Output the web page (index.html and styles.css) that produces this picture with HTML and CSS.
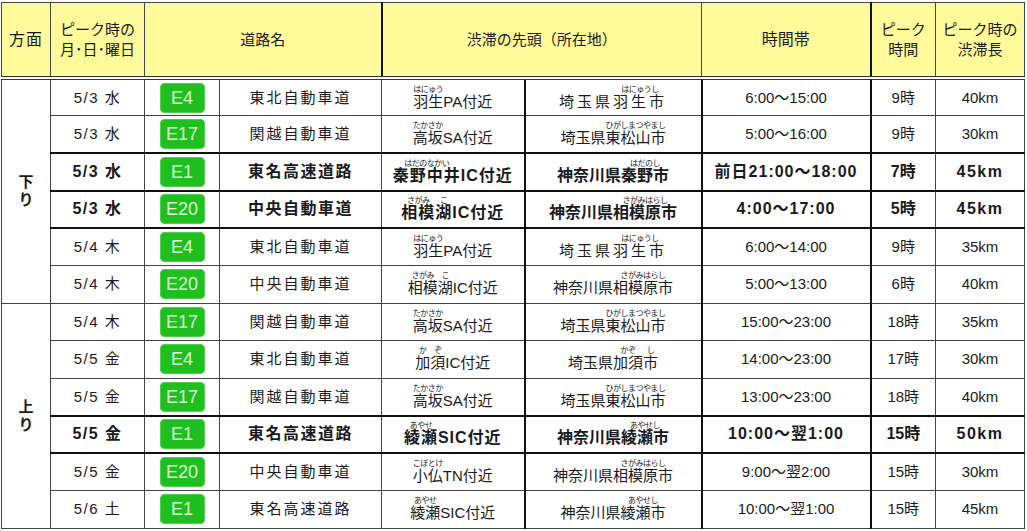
FILE: index.html
```html
<!DOCTYPE html>
<html lang="ja">
<head>
<meta charset="utf-8">
<title>渋滞予測</title>
<link rel="stylesheet" href="styles.css">
</head>
<body>
<div class="sheet">
<table class="traffic">
  <colgroup>
    <col class="w-dir"><col class="w-date"><col class="w-badge"><col class="w-road"><col class="w-loc1"><col class="w-loc2"><col class="w-time"><col class="w-peak"><col class="w-len">
  </colgroup>
  <thead>
    <tr>
      <th class="h-dir">方面</th>
      <th>ピーク時の<br>月･日･曜日</th>
      <th colspan="2">道路名</th>
      <th colspan="2" class="h-loc">渋滞の先頭（所在地）</th>
      <th class="h-time">時間帯</th>
      <th class="h-peak">ピーク<br>時間</th>
      <th>ピーク時の<br>渋滞長</th>
    </tr>
  </thead>
  <tbody>
    <tr>
      <td rowspan="6" class="dir">下<br>り</td>
      <td class="date">5/3 水</td>
      <td><span class="badge">E4</span></td>
      <td class="road">東北自動車道</td>
      <td class="loc1"><ruby>羽生<rt>はにゅう</rt></ruby>PA付近</td>
      <td class="loc2 wide">埼玉県<ruby>羽生市<rt>はにゅうし</rt></ruby></td>
      <td class="time">6:00〜15:00</td>
      <td class="peak">9時</td>
      <td class="len">40km</td>
    </tr>
    <tr>
      <td class="date">5/3 水</td>
      <td><span class="badge">E17</span></td>
      <td class="road">関越自動車道</td>
      <td class="loc1"><ruby>高坂<rt>たかさか</rt></ruby>SA付近</td>
      <td class="loc2">埼玉県<ruby>東松山市<rt>ひがしまつやまし</rt></ruby></td>
      <td class="time">5:00〜16:00</td>
      <td class="peak">9時</td>
      <td class="len">30km</td>
    </tr>
    <tr class="hl">
      <td class="date">5/3 水</td>
      <td><span class="badge">E1</span></td>
      <td class="road">東名高速道路</td>
      <td class="loc1"><ruby>秦野中井<rt>はだのなかい</rt></ruby>IC付近</td>
      <td class="loc2">神奈川県<ruby>秦野市<rt>はだのし</rt></ruby></td>
      <td class="time">前日21:00〜18:00</td>
      <td class="peak">7時</td>
      <td class="len">45km</td>
    </tr>
    <tr class="hl">
      <td class="date">5/3 水</td>
      <td><span class="badge">E20</span></td>
      <td class="road">中央自動車道</td>
      <td class="loc1"><ruby>相模<rt>さがみ</rt></ruby><ruby>湖<rt>こ</rt></ruby>IC付近</td>
      <td class="loc2">神奈川県<ruby>相模原市<rt>さがみはらし</rt></ruby></td>
      <td class="time">4:00〜17:00</td>
      <td class="peak">5時</td>
      <td class="len">45km</td>
    </tr>
    <tr>
      <td class="date">5/4 木</td>
      <td><span class="badge">E4</span></td>
      <td class="road">東北自動車道</td>
      <td class="loc1"><ruby>羽生<rt>はにゅう</rt></ruby>PA付近</td>
      <td class="loc2 wide">埼玉県<ruby>羽生市<rt>はにゅうし</rt></ruby></td>
      <td class="time">6:00〜14:00</td>
      <td class="peak">9時</td>
      <td class="len">35km</td>
    </tr>
    <tr>
      <td class="date">5/4 木</td>
      <td><span class="badge">E20</span></td>
      <td class="road">中央自動車道</td>
      <td class="loc1"><ruby>相模<rt>さがみ</rt></ruby><ruby>湖<rt>こ</rt></ruby>IC付近</td>
      <td class="loc2">神奈川県<ruby>相模原市<rt>さがみはらし</rt></ruby></td>
      <td class="time">5:00〜13:00</td>
      <td class="peak">6時</td>
      <td class="len">40km</td>
    </tr>
    <tr>
      <td rowspan="6" class="dir">上<br>り</td>
      <td class="date">5/4 木</td>
      <td><span class="badge">E17</span></td>
      <td class="road">関越自動車道</td>
      <td class="loc1"><ruby>高坂<rt>たかさか</rt></ruby>SA付近</td>
      <td class="loc2">埼玉県<ruby>東松山市<rt>ひがしまつやまし</rt></ruby></td>
      <td class="time">15:00〜23:00</td>
      <td class="peak">18時</td>
      <td class="len">35km</td>
    </tr>
    <tr>
      <td class="date">5/5 金</td>
      <td><span class="badge">E4</span></td>
      <td class="road">東北自動車道</td>
      <td class="loc1"><ruby>加<rt>か</rt></ruby><ruby>須<rt>ぞ</rt></ruby>IC付近</td>
      <td class="loc2">埼玉県<ruby>加須<rt>かぞ</rt></ruby><ruby>市<rt>し</rt></ruby></td>
      <td class="time">14:00〜23:00</td>
      <td class="peak">17時</td>
      <td class="len">30km</td>
    </tr>
    <tr>
      <td class="date">5/5 金</td>
      <td><span class="badge">E17</span></td>
      <td class="road">関越自動車道</td>
      <td class="loc1"><ruby>高坂<rt>たかさか</rt></ruby>SA付近</td>
      <td class="loc2">埼玉県<ruby>東松山市<rt>ひがしまつやまし</rt></ruby></td>
      <td class="time">13:00〜23:00</td>
      <td class="peak">18時</td>
      <td class="len">40km</td>
    </tr>
    <tr class="hl">
      <td class="date">5/5 金</td>
      <td><span class="badge">E1</span></td>
      <td class="road">東名高速道路</td>
      <td class="loc1"><ruby>綾瀬<rt>あやせ</rt></ruby>SIC付近</td>
      <td class="loc2">神奈川県<ruby>綾瀬市<rt>あやせし</rt></ruby></td>
      <td class="time">10:00〜翌1:00</td>
      <td class="peak">15時</td>
      <td class="len">50km</td>
    </tr>
    <tr>
      <td class="date">5/5 金</td>
      <td><span class="badge">E20</span></td>
      <td class="road">中央自動車道</td>
      <td class="loc1"><ruby>小仏<rt>こぼとけ</rt></ruby>TN付近</td>
      <td class="loc2">神奈川県<ruby>相模原市<rt>さがみはらし</rt></ruby></td>
      <td class="time">9:00〜翌2:00</td>
      <td class="peak">15時</td>
      <td class="len">30km</td>
    </tr>
    <tr>
      <td class="date">5/6 土</td>
      <td><span class="badge">E1</span></td>
      <td class="road">東名高速道路</td>
      <td class="loc1"><ruby>綾瀬<rt>あやせ</rt></ruby>SIC付近</td>
      <td class="loc2">神奈川県<ruby>綾瀬市<rt>あやせし</rt></ruby></td>
      <td class="time">10:00〜翌1:00</td>
      <td class="peak">15時</td>
      <td class="len">45km</td>
    </tr>
  </tbody>
</table>
</div>
</body>
</html>
```

FILE: styles.css
```css
html, body {
  margin: 0;
  background: #ffffff;
}

body {
  font-family: "Liberation Sans", "Noto Sans CJK JP", sans-serif;
  color: #1a1a1a;
}

.sheet {
  padding: 2px 0 0 1px;
}

.traffic {
  border-collapse: collapse;
  table-layout: fixed;
  width: 1023px;
  border: 1px solid #333;
}

.w-dir { width: 49px; }
.w-date { width: 94px; }
.w-badge { width: 75px; }
.w-road { width: 162px; }
.w-loc1 { width: 143px; }
.w-loc2 { width: 177px; }
.w-time { width: 169px; }
.w-peak { width: 65px; }
.w-len { width: 89px; }

.traffic th,
.traffic td {
  border: 1px solid #444;
  padding: 0;
  text-align: center;
  vertical-align: middle;
  white-space: nowrap;
}

.traffic thead th {
  background: #fffb9b;
  font-weight: normal;
  font-size: 15px;
  line-height: 20px;
  height: 73px;
  border-bottom: 4px double #333;
}

.traffic thead th.h-dir {
  font-size: 16px;
  letter-spacing: 1px;
}

.traffic thead th.h-time {
  font-size: 16px;
}

.traffic thead th.h-loc,
.traffic td.loc2,
.traffic td.time {
  border-left: 2px solid #111;
}

.traffic td.time,
.traffic thead th.h-time {
  border-right: 2px solid #111;
}

.traffic td.road {
  border-left: 1px solid #222;
}

.traffic tbody tr {
  height: 37.5px;
}

.traffic td {
  font-size: 15px;
  line-height: 18px;
}

.dir {
  font-size: 19px;
  font-weight: bold;
  line-height: 26px;
}

.date {
  letter-spacing: 1.5px;
}

.road {
  letter-spacing: 2px;
}

.loc2.wide {
  letter-spacing: 3px;
}

.loc1,
.loc2 {
  padding-top: 3px;
}

.loc1 ruby,
.loc2 ruby {
  ruby-align: center;
}

.loc1 rt,
.loc2 rt {
  font-size: 8px;
  line-height: 11px;
  letter-spacing: -0.5px;
  color: #222;
  ruby-align: center;
}

.badge {
  display: inline-flex;
  align-items: center;
  justify-content: center;
  width: 45px;
  height: 30px;
  border-radius: 5px;
  background: #1ebf1e;
  box-shadow: inset 0 0 0 1px #4fd04f;
  color: #dcf6d6;
  font-family: "Liberation Sans", sans-serif;
  font-size: 18px;
  font-weight: normal;
  letter-spacing: 0;
  vertical-align: middle;
}

.traffic tr.hl td {
  font-weight: bold;
  font-size: 16px;
  border-top: 2px solid #111;
  border-bottom: 2px solid #111;
}

.traffic tr.hl td.road {
  letter-spacing: 1.5px;
}

.traffic tr.hl td.loc1,
.traffic tr.hl td.time {
  letter-spacing: 1px;
}

.traffic tr.hl td.len {
  letter-spacing: 1.5px;
}

.traffic tr.hl rt {
  font-weight: normal;
  letter-spacing: -0.5px;
}
```
